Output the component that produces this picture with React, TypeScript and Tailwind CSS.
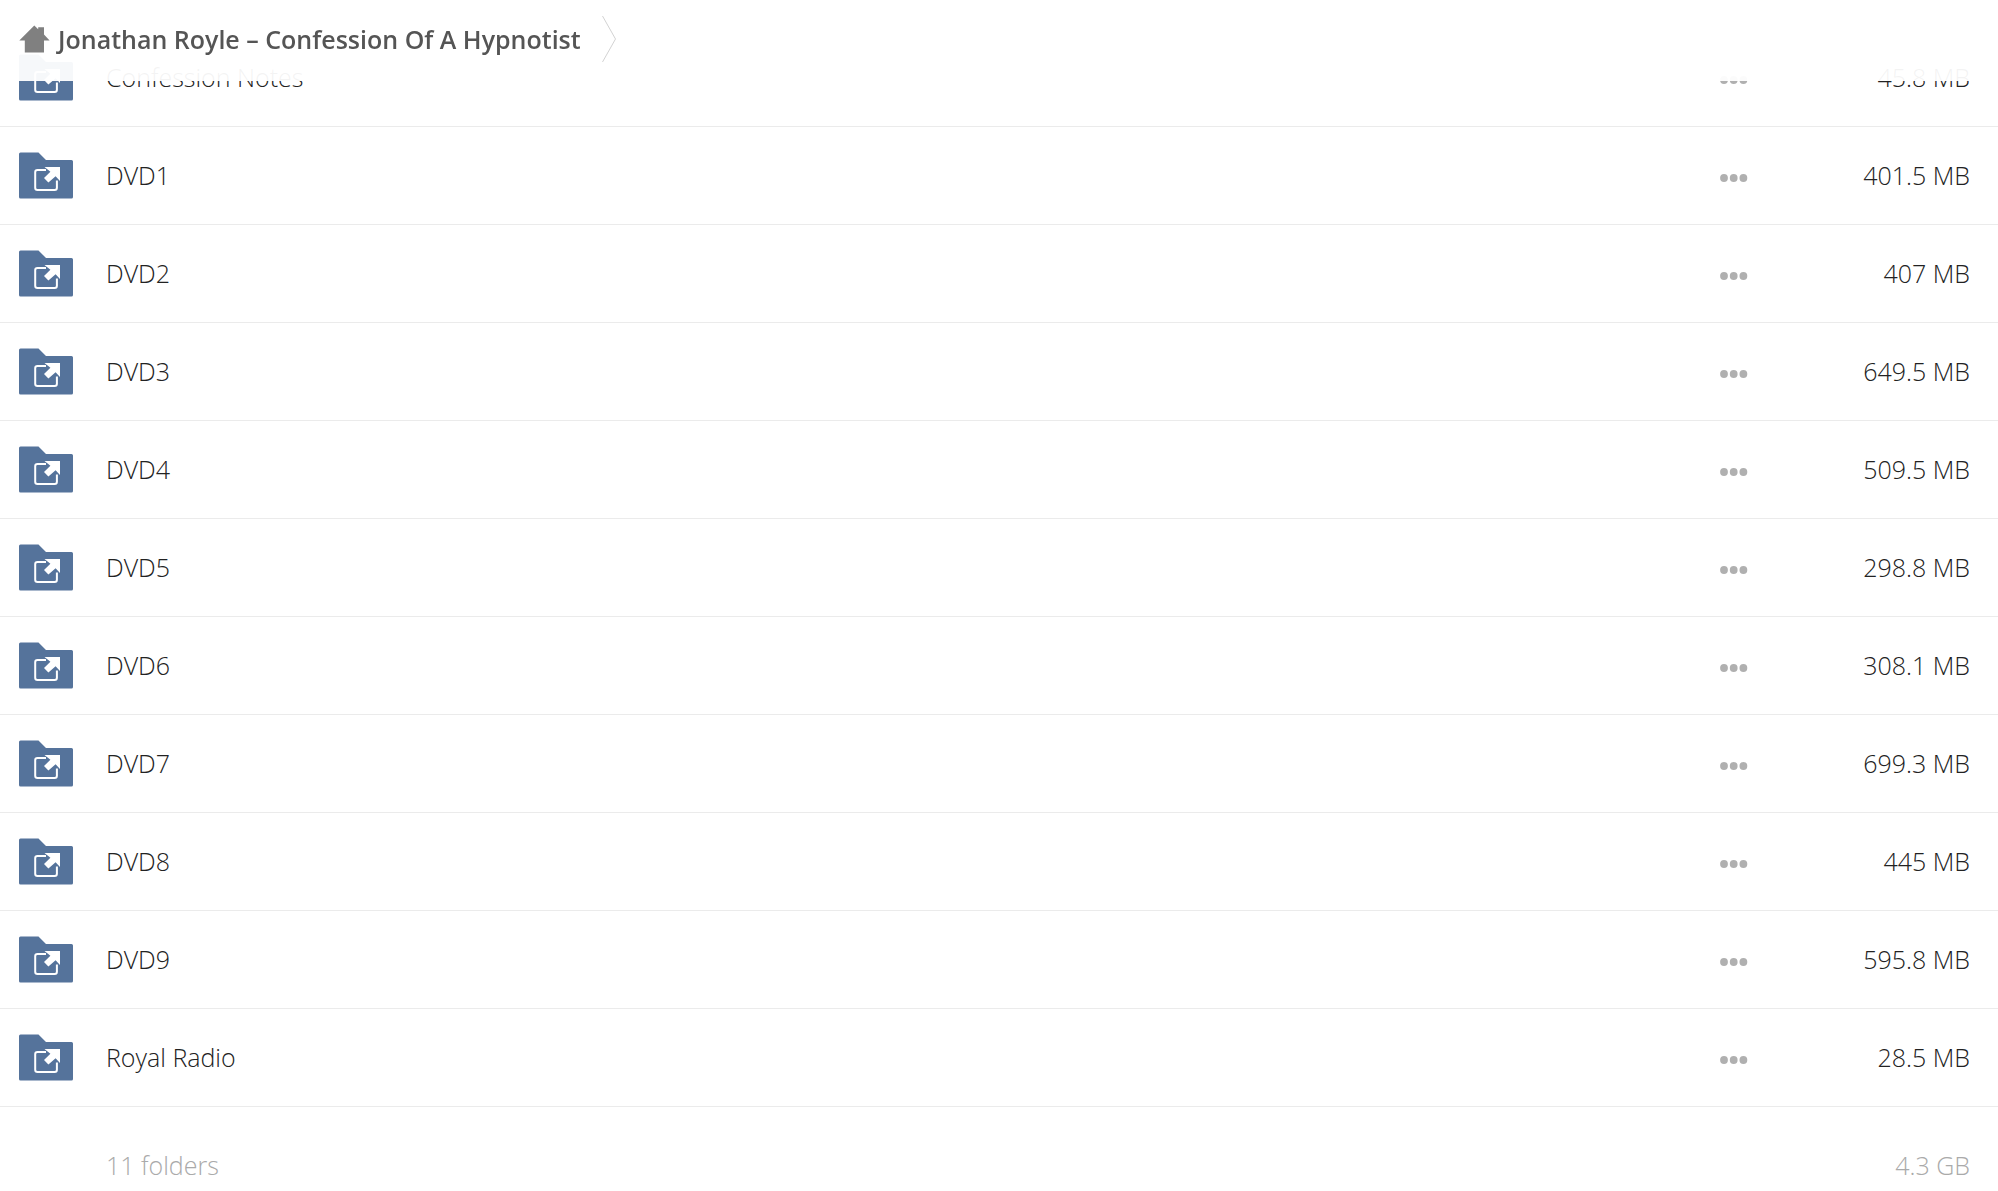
type Folder = {
  name: string;
  size: string;
};

const folders: Folder[] = [
  { name: "Confession Notes", size: "45.8 MB" },
  { name: "DVD1",             size: "401.5 MB" },
  { name: "DVD2",             size: "407 MB" },
  { name: "DVD3",             size: "649.5 MB" },
  { name: "DVD4",             size: "509.5 MB" },
  { name: "DVD5",             size: "298.8 MB" },
  { name: "DVD6",             size: "308.1 MB" },
  { name: "DVD7",             size: "699.3 MB" },
  { name: "DVD8",             size: "445 MB" },
  { name: "DVD9",             size: "595.8 MB" },
  { name: "Royal Radio",      size: "28.5 MB" },
];

function HomeIcon() {
  return (
    <svg width="31" height="28" viewBox="0 0 31 28" fill="#808080" aria-hidden="true">
      <path d="M15.3 0.6 L19.2 4.2 V2.2 H25 V9.6 L30.6 15.4 H25 V27.6 H5.8 V15.4 H0.3 Z" />
    </svg>
  );
}

function SharedFolderIcon() {
  return (
    <svg width="54" height="47" viewBox="0 0 54 47" fill="none" aria-hidden="true">
      <path
        d="M1.5 0.5 H19.5 L27 8 H52.5 Q54 8 54 9.5 V45 Q54 46.5 52.5 46.5 H1.5 Q0 46.5 0 45 V2 Q0 0.5 1.5 0.5 Z"
        fill="#55739b"
      />
      <path
        d="M27 18 H18.5 Q16.2 18 16.2 20.3 V35.7 Q16.2 38 18.5 38 H35.6 Q37.9 38 37.9 35.7 V28.5"
        stroke="#fff"
        strokeWidth="2"
      />
      <path d="M25.5 15 H41 V29 L36.6 24.2 L29.4 30.6 L25 26 L31.4 19.8 Z" fill="#fff" />
    </svg>
  );
}

function DotsIcon() {
  return (
    <svg width="28" height="8" viewBox="0 0 28 8" fill="#b0b0b0" aria-hidden="true">
      <circle cx="4" cy="4" r="3.9" />
      <circle cx="13.7" cy="4" r="3.9" />
      <circle cx="23.4" cy="4" r="3.9" />
    </svg>
  );
}

function FolderRow({ folder }: { folder: Folder }) {
  return (
    <tr>
      <td className="h-[98px] border-b border-[#ebebeb] pl-[19px]">
        <SharedFolderIcon />
      </td>
      <td className="border-b border-[#ebebeb] pb-0.5">
        <a href="#" className="block">{folder.name}</a>
      </td>
      <td className="border-b border-[#ebebeb]">
        <button type="button" aria-label={`More actions for ${folder.name}`} className="flex h-10 items-center pt-1">
          <DotsIcon />
        </button>
      </td>
      <td className="border-b border-[#ebebeb] pr-7 pb-px text-right">{folder.size}</td>
    </tr>
  );
}

export default function App() {
  return (
    <div className="min-h-screen bg-white font-['Open_Sans',sans-serif] text-[25px] leading-9 font-light text-[#222]">

      {/* Breadcrumb bar, the list scrolls beneath it */}
      <header className="fixed inset-x-0 top-0 z-10 flex h-[81px] items-center bg-white/95 pb-[3px] pl-[19px]">
        <a href="#" className="flex items-center gap-2 font-semibold text-[#555]">
          <HomeIcon />
          <h1>Jonathan Royle – Confession Of A Hypnotist</h1>
        </a>
        <svg width="16" height="48" viewBox="0 0 16 48" fill="none" stroke="#d2d2d2" className="ml-5" aria-hidden="true">
          <path d="M1.5 1 L14.5 24 L1.5 47" />
        </svg>
      </header>

      <main className="pt-[29px]">
        <table className="w-full table-fixed border-separate border-spacing-0">
          <colgroup>
            <col className="w-[106px]" />
            <col />
            <col className="w-[28px]" />
            <col className="w-[250px]" />
          </colgroup>
          <tbody>
            {folders.map((folder) => <FolderRow key={folder.name} folder={folder} />)}
          </tbody>
          <tfoot className="text-[#aaa]">
            <tr>
              <td />
              <td className="pt-10 pb-1">{folders.length} folders</td>
              <td />
              <td className="pt-10 pr-7 pb-1 text-right">4.3 GB</td>
            </tr>
          </tfoot>
        </table>
      </main>
    </div>
  );
}
